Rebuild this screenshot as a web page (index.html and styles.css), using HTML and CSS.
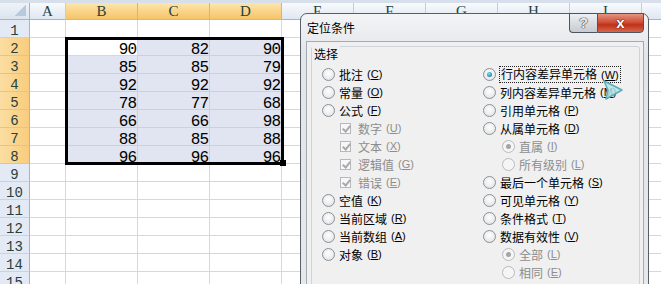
FILE: index.html
```html
<!DOCTYPE html>
<html lang="zh-CN">
<head>
    <meta charset="UTF-8">
    <title>定位条件</title>
    <link rel="stylesheet" href="styles.css">
</head>
<body>
    <div id="sheet">
        <div class="topbar"></div>
        <div id="grid"></div>
        <div class="range"></div>
        <div class="handle"></div>
    </div>

    <div class="dialog">
        <div class="titlebar">
            <span class="title">定位条件</span>
            <div class="caption-btns">
                <div class="btn-help">?</div>
                <div class="btn-close">x</div>
            </div>
        </div>
        <div class="client">
            <div class="group">
                <span class="group-label">选择</span>
                <div class="cols">
                    <div class="col">
                        <div class="opt"><span class="radio"></span>批注<span class="key">(<u>C</u>)</span></div>
                        <div class="opt"><span class="radio"></span>常量<span class="key">(<u>O</u>)</span></div>
                        <div class="opt"><span class="radio"></span>公式<span class="key">(<u>F</u>)</span></div>
                        <div class="opt chk off"><span class="check"></span>数字<span class="key">(<u>U</u>)</span></div>
                        <div class="opt chk off"><span class="check"></span>文本<span class="key">(<u>X</u>)</span></div>
                        <div class="opt chk off"><span class="check"></span>逻辑值<span class="key">(<u>G</u>)</span></div>
                        <div class="opt chk off"><span class="check"></span>错误<span class="key">(<u>E</u>)</span></div>
                        <div class="opt"><span class="radio"></span>空值<span class="key">(<u>K</u>)</span></div>
                        <div class="opt"><span class="radio"></span>当前区域<span class="key">(<u>R</u>)</span></div>
                        <div class="opt"><span class="radio"></span>当前数组<span class="key">(<u>A</u>)</span></div>
                        <div class="opt"><span class="radio"></span>对象<span class="key">(<u>B</u>)</span></div>
                    </div>
                    <div class="col">
                        <div class="opt"><span class="radio on"></span><span class="focus">行内容差异单元格<span class="key">(<u>W</u>)</span></span></div>
                        <div class="opt"><span class="radio"></span>列内容差异单元格<span class="key">(<u>M</u>)</span></div>
                        <div class="opt"><span class="radio"></span>引用单元格<span class="key">(<u>P</u>)</span></div>
                        <div class="opt"><span class="radio"></span>从属单元格<span class="key">(<u>D</u>)</span></div>
                        <div class="opt sub off"><span class="radio on"></span>直属<span class="key">(<u>I</u>)</span></div>
                        <div class="opt sub off"><span class="radio"></span>所有级别<span class="key">(<u>L</u>)</span></div>
                        <div class="opt"><span class="radio"></span>最后一个单元格<span class="key">(<u>S</u>)</span></div>
                        <div class="opt"><span class="radio"></span>可见单元格<span class="key">(<u>Y</u>)</span></div>
                        <div class="opt"><span class="radio"></span>条件格式<span class="key">(<u>T</u>)</span></div>
                        <div class="opt"><span class="radio"></span>数据有效性<span class="key">(<u>V</u>)</span></div>
                        <div class="opt sub off"><span class="radio on"></span>全部<span class="key">(<u>L</u>)</span></div>
                        <div class="opt sub off"><span class="radio"></span>相同<span class="key">(<u>E</u>)</span></div>
                    </div>
                </div>
            </div>
        </div>
    </div>

    <svg class="cursor" width="24" height="22" viewBox="0 0 24 22">
        <polygon points="3,2 21,11 5,20 7,11" fill="rgba(178,228,233,0.85)" stroke="#5fadb8" stroke-width="1.6" stroke-linejoin="round"/>
    </svg>

    <script>
        // J only shows as a sliver at the right edge, so no letter
        const cols = ['', 'A', 'B', 'C', 'D', 'E', 'F', 'G', 'H', 'I', ''];
        const data = {
            2: [90, 82, 90],
            3: [85, 85, 79],
            4: [92, 92, 92],
            5: [78, 77, 68],
            6: [66, 66, 98],
            7: [88, 85, 88],
            8: [96, 96, 96]
        };
        const grid = document.getElementById('grid');

        // column headers
        cols.forEach((c, i) => {
            const d = document.createElement('div');
            d.className = i === 0 ? 'corner' : 'colhead' + (i >= 2 && i <= 4 ? ' on' : '');
            d.textContent = c;
            grid.appendChild(d);
        });

        // rows
        for (let r = 1; r <= 15; r++) {
            const h = document.createElement('div');
            h.className = 'rowhead' + (r >= 2 && r <= 8 ? ' on' : '');
            h.textContent = r;
            grid.appendChild(h);
            for (let c = 1; c < cols.length; c++) {
                const d = document.createElement('div');
                d.className = 'cell';
                if (data[r] && c >= 2 && c <= 4) {
                    d.textContent = data[r][c - 2];
                    if (!(r === 2 && c === 2)) d.classList.add('sel');
                }
                grid.appendChild(d);
            }
        }
    </script>
</body>
</html>
```

FILE: styles.css
```css
* {
    box-sizing: border-box;
}
body {
    margin: 0;
    width: 661px;
    height: 284px;
    overflow: hidden;
    position: relative;
    background: #fff;
    font-family: "Liberation Mono", monospace;
}
#sheet {
    position: relative;
}
.topbar {
    height: 3px;
    background: #d6dfea;
}
#grid {
    display: grid;
    grid-template-columns: 30px 36px repeat(9, 72px);
    grid-template-rows: 17px;
    grid-auto-rows: 18px;
}
.corner {
    position: relative;
    background: linear-gradient(#eef3f9, #dbe4ef);
    border-right: 1px solid #9eb6ce;
    border-bottom: 1px solid #9eb6ce;
}
.corner::after {
    content: '';
    position: absolute;
    right: 3px;
    bottom: 3px;
    width: 11px;
    height: 11px;
    background: linear-gradient(135deg, transparent 50%, #b9c9dc 50%);
}
.colhead {
    background: linear-gradient(#f8fafd, #dfe7f1);
    border-right: 1px solid #c2cfdf;
    border-bottom: 1px solid #9eb6ce;
    text-align: center;
    font-family: "Liberation Serif", serif;
    font-size: 15px;
    line-height: 17px;
    color: #27413e;
}
.colhead.on {
    background: linear-gradient(#fde5ac, #f5c468);
    border-right-color: #e4b45c;
    border-bottom-color: #f2b444;
}
.rowhead {
    background: #e3eaf5;
    border-right: 1px solid #9eb6ce;
    border-bottom: 1px solid #c5d3e3;
    text-align: center;
    font-size: 14px;
    line-height: 17px;
    padding-top: 3px;
    color: #27413e;
}
.rowhead.on {
    background: linear-gradient(90deg, #fcdea3, #f8cc7c);
    border-bottom-color: #efc372;
    border-right-color: #e5ad48;
}
.cell {
    border-right: 1px solid #d0d7e5;
    border-bottom: 1px solid #d0d7e5;
    text-align: right;
    font-size: 16px;
    letter-spacing: -1px;
    line-height: 17px;
    padding: 4px 1px 0 0;
    color: #000;
}
.cell.sel {
    background: #e0e5f1;
    border-color: #c9d0e0;
}
.range {
    position: absolute;
    left: 65px;
    top: 37px;
    width: 219px;
    height: 128px;
    border: 3px solid #000;
}
.handle {
    position: absolute;
    left: 280px;
    top: 160px;
    width: 6px;
    height: 6px;
    background: #000;
}

/* dialog */
.dialog {
    position: absolute;
    left: 300px;
    top: 13px;
    width: 349px;
    height: 290px;
    border: 1px solid #585f68;
    border-radius: 7px 7px 0 0;
    background: linear-gradient(#f3f4f6, #e3e6e9 40px, #e6e8eb);
    font-family: "Noto Sans CJK SC", sans-serif;
    font-size: 12px;
    color: #000;
    display: flex;
    flex-direction: column;
}
.titlebar {
    height: 27px;
    flex: none;
    display: flex;
    padding-left: 6px;
    padding-right: 4px;
}
.title {
    line-height: 27px;
    font-size: 12px;
}
.caption-btns {
    margin-left: auto;
    margin-top: -1px;
    display: flex;
    align-self: flex-start;
}
.btn-help,
.btn-close {
    height: 20px;
    border: 1px solid #4d545c;
    text-align: center;
    font-family: "Liberation Sans", sans-serif;
    font-weight: bold;
    line-height: 18px;
}
.btn-help {
    width: 28px;
    border-right: none;
    border-radius: 0 0 0 4px;
    background: linear-gradient(#eef0f2, #d9dde1 50%, #c7ccd2);
    font-size: 15px;
    color: #e9e9e9;
    text-shadow: 0 0 1px #444, 0 0 1px #444, 0 0 1px #444;
}
.btn-close {
    width: 47px;
    border-radius: 0 0 4px 0;
    background: linear-gradient(#e5947f, #d0503a 45%, #bf3219 60%, #d6684c);
    font-size: 15px;
    color: #fff;
    text-shadow: 0 0 1px #5a1a10, 0 0 1px #5a1a10, 0 0 1px #5a1a10;
}
.client {
    flex: 1;
    margin: 0 4px 0 5px;
    border: 1px solid #a3aab2;
    background: #f0f0f0;
    padding: 4px 3px 0 4px;
}
.group {
    position: relative;
    height: 240px;
    border: 1px solid #cdd3d8;
    border-radius: 3px;
    padding: 18px 0 0 10px;
}
.group-label {
    position: absolute;
    left: 0;
    top: -1px;
    padding: 0 2px;
    line-height: 15px;
    background: #f0f0f0;
}
.cols {
    display: grid;
    grid-template-columns: 161px 1fr;
}
.opt {
    display: flex;
    align-items: center;
    height: 18px;
    white-space: nowrap;
}
.opt.chk {
    padding-left: 18px;
}
.opt.sub {
    padding-left: 19px;
}
.off {
    color: #8d8d8d;
}
.key {
    font-family: "Liberation Sans", sans-serif;
    font-size: 11px;
    margin-left: 4px;
}
.focus {
    outline: 1px dotted #222;
    padding: 0 1px;
    line-height: 14px;
}
.radio {
    flex: none;
    position: relative;
    width: 13px;
    height: 13px;
    margin-right: 4px;
    border-radius: 50%;
    border: 1px solid #8c9195;
    background: radial-gradient(circle at 50% 40%, #ffffff, #e6e8ea 70%, #d3d6d9);
}
.radio.on::after {
    content: '';
    position: absolute;
    left: 3px;
    top: 3px;
    width: 5px;
    height: 5px;
    border-radius: 50%;
    background: radial-gradient(circle at 40% 35%, #8ddcf5, #1a86b6 70%);
}
.off .radio {
    border-color: #b7babd;
    background: #f5f5f5;
}
.off .radio.on::after {
    background: #a5a5a5;
}
.check {
    flex: none;
    position: relative;
    width: 11px;
    height: 11px;
    margin-right: 7px;
    border: 1px solid #b5b9bd;
    background: #f7f7f7;
}
.check::after {
    content: '';
    position: absolute;
    left: 3px;
    top: 0;
    width: 3px;
    height: 6px;
    border-right: 2px solid #a9a9a9;
    border-bottom: 2px solid #a9a9a9;
    transform: rotate(40deg);
}
.cursor {
    position: absolute;
    left: 601px;
    top: 79px;
}
```
